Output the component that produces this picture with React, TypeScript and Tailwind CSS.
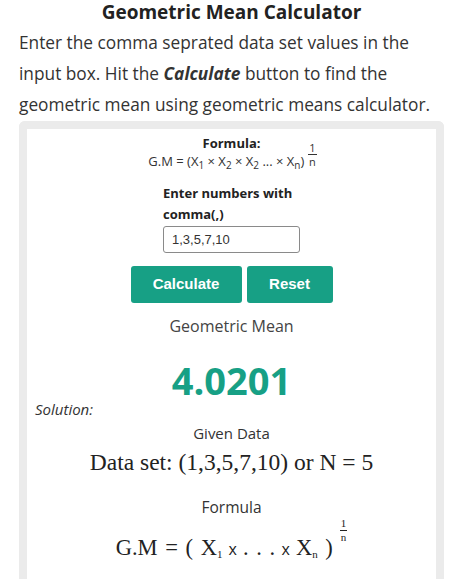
import React from "react";

function Frac({ className }: { className?: string }) {
  return (
    <span className={"inline-flex flex-col items-center leading-none " + (className ?? "")}>
      <span className="border-b border-current px-[1px] pb-[1px]">1</span>
      <span className="pt-[1px]">n</span>
    </span>
  );
}

export default function App() {
  const os = { fontFamily: '"Open Sans", "Noto Sans", sans-serif' };
  const serif = { fontFamily: '"Liberation Serif", "Times New Roman", serif' };
  return (
    <div className="w-[450px] h-[579px] overflow-hidden bg-white" style={os}>
      <div className="ml-[19px] w-[425px]">
        <h1 className="text-center text-[19px] font-bold leading-[24px] text-[#222]">
          Geometric Mean Calculator
        </h1>
        <p className="text-[17.3px] leading-[31px] text-[#333] mt-[3px]">
          Enter the comma seprated data set values in the input box. Hit the{" "}
          <b className="italic">Calculate</b> button to find the geometric mean using geometric means calculator.
        </p>
        <div className="mt-[1px] border-[8px] border-b-0 border-[#ebebeb] rounded-t-[6px] bg-white h-[600px]">
          <div className="flex flex-col items-center pt-[5px]">
            <div className="text-[13px] font-bold leading-[18px] text-[#222]">Formula:</div>
            <div className="flex items-start text-[13px] text-[#333] leading-[18px] mt-[0px] ml-[2px]">
              <span>
                G.M = (X<sub className="text-[10px]">1</sub> × X<sub className="text-[10px]">2</sub> × X
                <sub className="text-[10px]">2</sub> ... × X<sub className="text-[10px]">n</sub>)
              </span>
              <Frac className="text-[11px] ml-[4px] -mt-[10px]" />
            </div>
            <div className="w-[137px] mt-[13px] text-[13px] font-bold leading-[21px] text-[#222]">
              Enter numbers with comma(,)
            </div>
            <div
              className="w-[137px] h-[27px] mt-[1px] border border-[#8a8a8a] rounded-[3px] px-[8px] flex items-center text-[13px] text-[#333]"
              style={{ fontFamily: '"Liberation Sans", Arial, sans-serif' }}
            >
              1,3,5,7,10
            </div>
            <div
              className="flex gap-[5px] mt-[13px]"
              style={{ fontFamily: '"Liberation Sans", Arial, sans-serif' }}
            >
              <div className="w-[111px] h-[37px] bg-[#17a085] rounded-[3px] flex items-center justify-center text-white font-bold text-[15px]">
                Calculate
              </div>
              <div className="w-[86px] h-[37px] bg-[#17a085] rounded-[3px] flex items-center justify-center text-white font-bold text-[15px]">
                Reset
              </div>
            </div>
            <div className="mt-[13px] text-[16px] leading-[20px] text-[#444]">Geometric Mean</div>
            <div className="mt-[23px] text-[38px] font-bold leading-[42px] text-[#17a085]">4.0201</div>
          </div>
          <div className="ml-[8px] -mt-[2px] italic text-[15px] leading-[20px] text-[#333]">Solution:</div>
          <div className="flex flex-col items-center">
            <div className="mt-[4px] text-[15px] leading-[20px] text-[#333]">Given Data</div>
            <div className="mt-[5px] text-[23.5px] leading-[28px] text-[#222]" style={serif}>
              Data set: (1,3,5,7,10) or N = 5
            </div>
            <div className="mt-[21px] text-[15.5px] leading-[20px] text-[#333]">Formula</div>
            <div
              className="mt-[16px] flex items-start text-[22.5px] leading-[30px] text-[#222] [word-spacing:2px]"
              style={serif}
            >
              <span>
                G.M = ( X<sub className="text-[11px]">1</sub>
                <span className="text-[16px]" style={os}> x </span>. . .
                <span className="text-[16px]" style={os}> x </span>X<sub className="text-[11px]">n</sub> )
              </span>
              <Frac className="text-[11px] ml-[7px] -mt-[15px]" />
            </div>
          </div>
        </div>
      </div>
    </div>
  );
}
